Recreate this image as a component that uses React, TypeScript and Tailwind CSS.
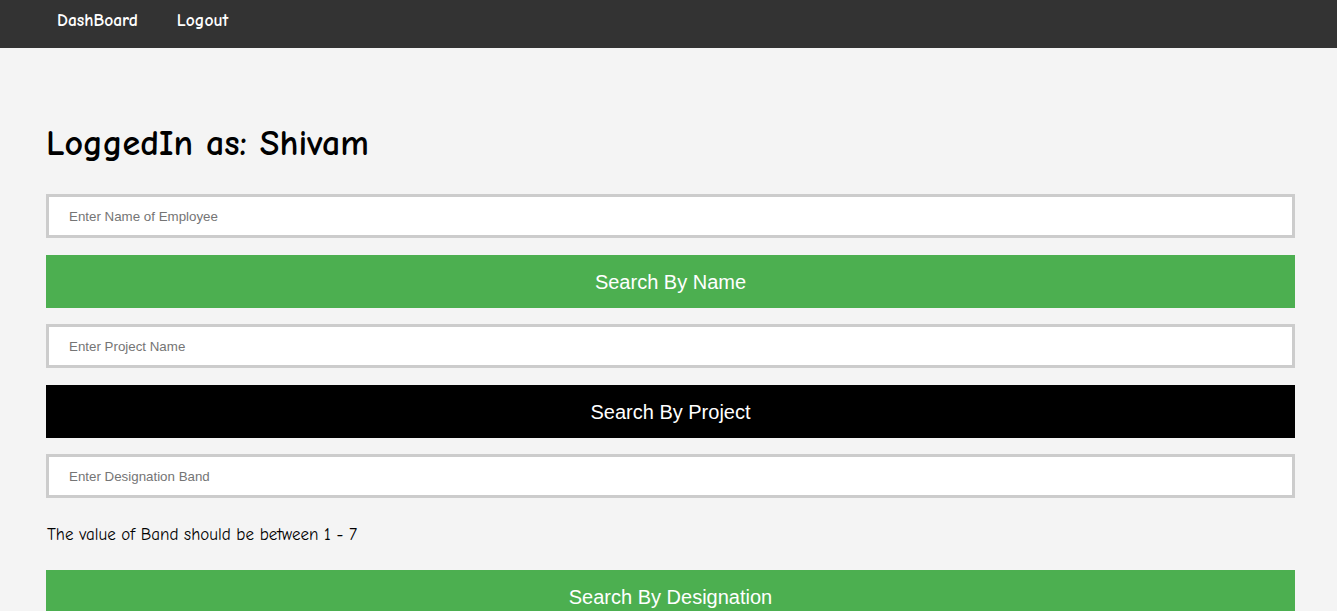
import React from "react";

const comic = { fontFamily: '"Comic Sans MS", "Comic Neue", "DejaVu Sans", sans-serif' };

function SearchInput({ placeholder }: { placeholder: string }) {
  return (
    <input
      type="text"
      placeholder={placeholder}
      className="block w-full h-[44px] bg-white border-[3px] border-[#cccccc] pl-[20px] text-[13.33px] text-black placeholder:text-[#757575] outline-none font-['Liberation_Sans',Arial,sans-serif]"
    />
  );
}

function SearchButton({ label, dark }: { label: string; dark?: boolean }) {
  return (
    <button
      className={`block w-full h-[53px] text-white text-[20px] font-['Liberation_Sans',Arial,sans-serif] ${
        dark ? "bg-black" : "bg-[#4caf50]"
      }`}
    >
      {label}
    </button>
  );
}

export default function App() {
  return (
    <div className="min-h-[611px] bg-[#f4f4f4]" style={comic}>
      {/* Top nav */}
      <nav className="h-[48px] bg-[#333333] flex items-start pl-[57px] gap-[39px] pt-[8px]">
        <a className="text-white text-[17.5px] font-bold leading-[24px]">DashBoard</a>
        <a className="text-white text-[17.5px] font-bold leading-[24px]">Logout</a>
      </nav>

      <div className="pl-[46px] pr-[42px] pt-[74px]">
        <h1 className="text-[36px] font-bold text-black leading-[44px] mb-[28px]">
          LoggedIn as: Shivam
        </h1>

        <div className="flex flex-col">
          <SearchInput placeholder="Enter Name of Employee" />
          <div className="h-[17px]" />
          <SearchButton label="Search By Name" />
          <div className="h-[16px]" />
          <SearchInput placeholder="Enter Project Name" />
          <div className="h-[17px]" />
          <SearchButton label="Search By Project" dark />
          <div className="h-[16px]" />
          <SearchInput placeholder="Enter Designation Band" />
          <p className="text-[17px] text-black mt-[25px] mb-[23px] leading-[24px] pl-[1px]">
            The value of Band should be between 1 - 7
          </p>
          <SearchButton label="Search By Designation" />
        </div>
      </div>
    </div>
  );
}
